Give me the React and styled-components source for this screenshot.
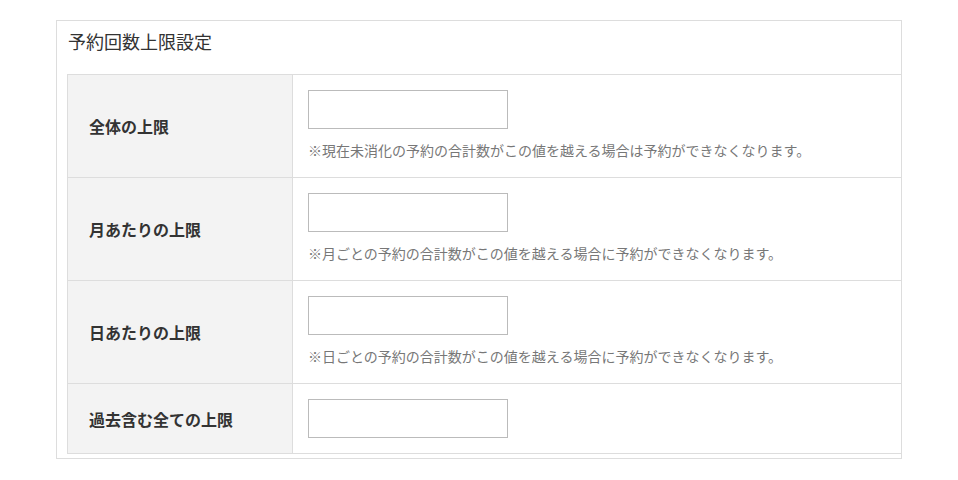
import React from "react";
import styled, { createGlobalStyle } from "styled-components";

const Global = createGlobalStyle`
  html, body { margin: 0; padding: 0; background: #fff; }
  body { font-family: "Noto Sans CJK JP", "Noto Sans", sans-serif; color: #333; }
`;

const Page = styled.div`
  padding: 20px 56px;
`;

const Panel = styled.section`
  border: 1px solid #ddd;
  padding: 0 0 4px 10px;
  background: #fff;
`;

const Title = styled.h2`
  margin: 0;
  padding: 7px 0 19px 1px;
  font-size: 18px;
  line-height: 27px;
  font-weight: normal;
  color: #333;
`;

const Table = styled.table`
  width: 100%;
  border-collapse: collapse;
`;

const Row = styled.tr`
  border-top: 1px solid #ddd;
  border-bottom: 1px solid #ddd;
`;

const Label = styled.th`
  width: 225px;
  box-sizing: border-box;
  background: #f3f3f3;
  border-left: 1px solid #ddd;
  border-right: 1px solid #ddd;
  padding: 0 0 0 21px;
  text-align: left;
  vertical-align: middle;
  font-size: 16px;
  font-weight: bold;
  color: #333;
`;

const Cell = styled.td`
  padding: 15px 15px;
  vertical-align: top;
`;

const Input = styled.input`
  display: block;
  box-sizing: border-box;
  width: 200px;
  height: 39px;
  margin: 0;
  border: 1px solid #bbb;
  border-radius: 0;
  background: #fff;
  font-size: 14px;
  padding: 0 8px;
`;

const Note = styled.p`
  margin: 9px 0 0;
  font-size: 14px;
  line-height: 24px;
  color: #777;
  white-space: nowrap;
`;

const rows = [
  { label: "全体の上限", note: "※現在未消化の予約の合計数がこの値を越える場合は予約ができなくなります。" },
  { label: "月あたりの上限", note: "※月ごとの予約の合計数がこの値を越える場合に予約ができなくなります。" },
  { label: "日あたりの上限", note: "※日ごとの予約の合計数がこの値を越える場合に予約ができなくなります。" },
  { label: "過去含む全ての上限", note: null },
];

export default function App() {
  return (
    <>
      <Global />
      <Page>
        <Panel>
          <Title>予約回数上限設定</Title>
          <Table>
            <tbody>
              {rows.map((r) => (
                <Row key={r.label}>
                  <Label>{r.label}</Label>
                  <Cell>
                    <Input type="text" />
                    {r.note && <Note>{r.note}</Note>}
                  </Cell>
                </Row>
              ))}
            </tbody>
          </Table>
        </Panel>
      </Page>
    </>
  );
}
